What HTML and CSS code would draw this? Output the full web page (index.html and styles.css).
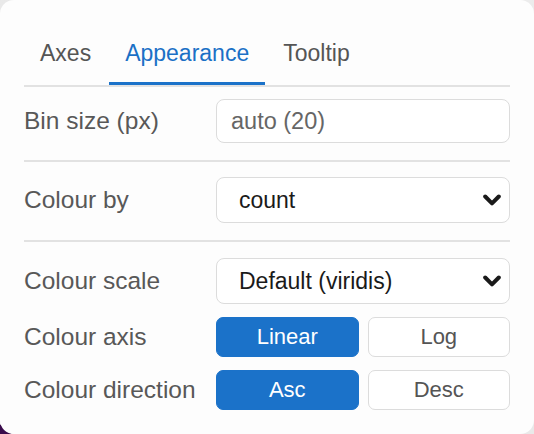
FILE: index.html
```html
<!DOCTYPE html>
<html lang="en">
<head>
<meta charset="utf-8">
<title>Appearance settings</title>
<link rel="stylesheet" href="styles.css">
</head>
<body>
<div class="card">
  <nav class="tabs">
    <div class="tab">Axes</div>
    <div class="tab active">Appearance</div>
    <div class="tab">Tooltip</div>
  </nav>

  <section class="section sec-bin">
    <div class="row">
      <label class="label">Bin size (px)</label>
      <input class="input" type="text" placeholder="auto (20)">
    </div>
  </section>

  <section class="section sec-colour">
    <div class="row">
      <label class="label">Colour by</label>
      <div class="select-wrap">
        <select class="select"><option>count</option></select>
        <svg class="chevron" viewBox="0 0 18 12" width="18" height="12"><polyline points="2.2,2.5 9,9.3 15.8,2.5" fill="none" stroke="#1a1a1a" stroke-width="4" stroke-linecap="round" stroke-linejoin="round"/></svg>
      </div>
    </div>
  </section>

  <section class="section sec-scale">
    <div class="row">
      <label class="label">Colour scale</label>
      <div class="select-wrap">
        <select class="select"><option>Default (viridis)</option></select>
        <svg class="chevron" viewBox="0 0 18 12" width="18" height="12"><polyline points="2.2,2.5 9,9.3 15.8,2.5" fill="none" stroke="#1a1a1a" stroke-width="4" stroke-linecap="round" stroke-linejoin="round"/></svg>
      </div>
    </div>
    <div class="row">
      <label class="label">Colour axis</label>
      <div class="toggle">
        <button class="btn on">Linear</button>
        <button class="btn">Log</button>
      </div>
    </div>
    <div class="row">
      <label class="label">Colour direction</label>
      <div class="toggle">
        <button class="btn on">Asc</button>
        <button class="btn">Desc</button>
      </div>
    </div>
  </section>
</div>
</body>
</html>
```
FILE: styles.css
```css
html, body {
  margin: 0;
  padding: 0;
}
body {
  width: 534px;
  height: 434px;
  background: linear-gradient(40deg, #3a0b4c 0, #3a0b4c 7px, #e6e6e6 8px, #ececec 100%);
  font-family: "Liberation Sans", Arial, Helvetica, sans-serif;
}
.card {
  box-sizing: border-box;
  width: 534px;
  height: 434px;
  background: #fdfdfd;
  border-radius: 14px;
  padding: 24px 24px 0 24px;
}
.tabs {
  display: flex;
  gap: 2px;
  border-bottom: 2px solid #e2e2e2;
}
.tab {
  font-size: 23px;
  line-height: 26px;
  color: #555555;
  padding: 16px 16px 16px 16px;
  border-bottom: 3px solid transparent;
}
.tab.active {
  color: #1b70c6;
  border-bottom-color: #1b72c9;
}
.section {
  display: flex;
  flex-direction: column;
  gap: 13px;
}
.sec-bin {
  padding: 12px 0 17px;
  border-bottom: 2px solid #e2e2e2;
}
.sec-colour {
  padding: 15px 0 17px;
  border-bottom: 2px solid #e2e2e2;
}
.sec-scale {
  padding: 16px 0 0;
}
.row {
  display: grid;
  grid-template-columns: 192px 1fr;
  align-items: center;
}
.label {
  font-size: 24.5px;
  color: #585858;
  white-space: nowrap;
}
.input {
  box-sizing: border-box;
  height: 44px;
  width: 100%;
  border: 1.5px solid #dcdcdc;
  border-radius: 8px;
  padding: 0 14px;
  font-family: inherit;
  font-size: 23.5px;
  color: #222;
  background: #fff;
  outline: none;
}
.input::placeholder {
  color: #666666;
}
.select-wrap {
  position: relative;
}
.select {
  box-sizing: border-box;
  -webkit-appearance: none;
  appearance: none;
  width: 100%;
  height: 46px;
  border: 1.5px solid #dcdcdc;
  border-radius: 8px;
  padding: 0 40px 0 22px;
  font-family: inherit;
  font-size: 23px;
  color: #1a1a1a;
  background: #fff;
  outline: none;
}
.chevron {
  position: absolute;
  right: 9px;
  top: 17px;
  pointer-events: none;
}
.toggle {
  display: grid;
  grid-template-columns: 1fr 1fr;
  gap: 9px;
}
.btn {
  box-sizing: border-box;
  height: 40px;
  border: 1.5px solid #dcdcdc;
  border-radius: 7px;
  background: #fff;
  color: #555555;
  font-family: inherit;
  font-size: 22px;
  padding: 0;
}
.btn.on {
  background: #1b72c9;
  border-color: #1b72c9;
  color: #ffffff;
}
```
